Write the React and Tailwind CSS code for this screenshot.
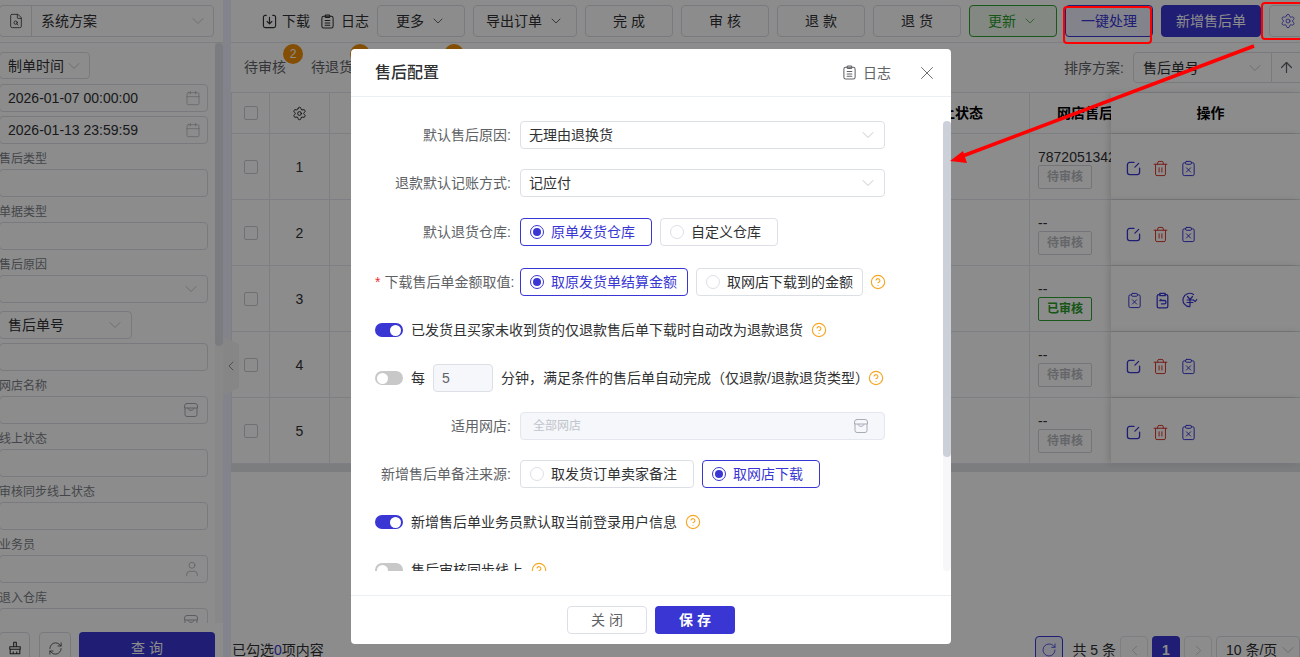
import { ChevronDown, ChevronLeft, ChevronRight, Calendar, Settings, RotateCw, Trash2, ClipboardX, ArrowUp, CircleHelp, FileSearch, User, X, RefreshCw } from 'lucide-react'

const DownloadIcon = () => (
  <svg width="15" height="15" viewBox="0 0 16 16" fill="none" stroke="currentColor" strokeWidth="1.2" strokeLinecap="round" strokeLinejoin="round">
    <path d="M4.5 1.5H3.5a2 2 0 0 0-2 2v9a2 2 0 0 0 2 2h9a2 2 0 0 0 2-2v-9a2 2 0 0 0-2-2h-1" />
    <path d="M8 3.5v7M5.5 8 8 10.5 10.500 8" />
  </svg>
)

const LogIcon = () => (
  <svg width="15" height="15" viewBox="0 0 16 16" fill="none" stroke="currentColor" strokeWidth="1.1" strokeLinecap="round" strokeLinejoin="round">
    <rect x="2" y="2.500" width="12" height="12.500" rx="2" />
    <rect x="5.500" y="1" width="5" height="2.800" rx="1" />
    <path d="M5.500 7h5M5.500 9.500h5M5.500 12h5" />
  </svg>
)

const ShopIcon = ({ size = 15, className = '' }) => (
  <svg className={className} width={size} height={size} viewBox="0 0 16 16" fill="none" stroke="currentColor" strokeWidth="1" strokeLinecap="round" strokeLinejoin="round">
    <path d="M4 1.500h8a2.500 2.500 0 0 1 2.500 2.500v2h-13V4A2.500 2.500 0 0 1 4 1.500Z" />
    <path d="M2 6v6.500a2 2 0 0 0 2 2h8a2 2 0 0 0 2-2V6" />
    <path d="M5 6.500c.5 2.500 5.500 2.500 6 0" />
  </svg>
)

const BroomIcon = () => (
  <svg width="14" height="14" viewBox="0 0 16 16" fill="none" stroke="currentColor" strokeWidth="1.2" strokeLinejoin="round">
    <path d="M6.500 1.500h3v5h-3zM2 6.500h12v3H2zM2.500 9.500v5h11v-5M6 14.500v-2.500M10 14.500v-2.500" />
  </svg>
)

const EditIcon = () => (
  <svg width="15" height="15" viewBox="0 0 16 16" fill="none" stroke="#3936d4" strokeWidth="1.4" strokeLinecap="round">
    <path d="M8.500 1.500H4a2.500 2.500 0 0 0-2.500 2.500v8A2.500 2.500 0 0 0 4 14.500h8a2.500 2.500 0 0 0 2.500-2.500V7.500" />
    <path d="M13.500 2.500 9.500 6.500" />
  </svg>
)

const ReturnIcon = () => (
  <svg width="17" height="17" viewBox="0 0 16 16" fill="none" stroke="#3936d4" strokeWidth="1.2" strokeLinecap="round" strokeLinejoin="round">
    <path d="M5.500 2.500H4.500a1.500 1.500 0 0 0-1.500 1.500v9.500a1.500 1.500 0 0 0 1.500 1.500h7a1.500 1.500 0 0 0 1.500-1.500V4a1.500 1.500 0 0 0-1.500-1.500h-1" />
    <path d="M5.500 1.200h5v2.300h-5z" />
    <path d="M6.500 7 5.500 8h4.200a1.500 1.500 0 0 1 0 3.200H7" />
  </svg>
)

const RefundIcon = () => (
  <svg width="16" height="16" viewBox="0 0 16 16" fill="none" stroke="#3936d4" strokeWidth="1.2" strokeLinecap="round" strokeLinejoin="round">
    <path d="M11.500 2.500A6.700 6.700 0 1 0 8 14.700" />
    <path d="M5.500 4.500 8 7.500l2.500-3M5 8h6M5 10.500h6M8 8v5.500M14.800 7.500l-1.500 2-2-1.500" />
  </svg>
)

const Help = () => <CircleHelp size={16} strokeWidth={1.7} className="text-[#f5a623] shrink-0" />

const Chevron = ({ className = '' }) => <ChevronDown size={20} strokeWidth={1} className={`text-[#b8bcc5] shrink-0 ${className}`} />

function Box({ children, className = '' }) {
  return (
    <div className={`h-7 flex items-center justify-between pl-2 pr-[6px] border border-[#dcdfe6] rounded-[4px] bg-white text-[#303133] text-sm whitespace-nowrap ${className}`}>
      {children}
    </div>
  )
}

function Field({ label, children }) {
  return (
    <div>
      <div className="h-[25px] pt-[4px] leading-[22px] text-xs text-[#7b7f87] whitespace-nowrap">{label}</div>
      <Box>{children}</Box>
    </div>
  )
}

function Sidebar() {
  return (
    <aside className="w-[223px] h-full flex flex-col shrink-0 bg-white">
      <div className="h-[43px] shrink-0 border-b border-[#e4e7ed] flex items-start pt-[5px] pr-[9px]">
        <div className="-ml-px flex-1 h-[32px] flex items-center border border-[#dcdfe6] rounded-[4px] text-sm text-[#303133]">
          <div className="w-[32px] h-full flex items-center justify-center border-r border-[#dcdfe6]">
            <FileSearch size={16} strokeWidth={1.2} />
          </div>
          <span className="ml-[9px] flex-1">系统方案</span>
          <Chevron className="mr-[5px]" />
        </div>
      </div>
      <div className="flex-1 flex min-h-0">
        <div className="w-[215px] overflow-hidden pt-[9px] pr-[7px]">
          <div className="-ml-px flex flex-col">
            <Box className="w-[91px] !h-[27px]">制单时间<Chevron /></Box>
            <Box className="mt-[5px]"><span>2026-01-07 00:00:00</span><Calendar size={16} strokeWidth={1} className="text-[#a8acb5]" /></Box>
            <Box className="mt-1"><span>2026-01-13 23:59:59</span><Calendar size={16} strokeWidth={1} className="text-[#a8acb5]" /></Box>
            <Field label="售后类型" />
            <Field label="单据类型" />
            <Field label="售后原因"><span /><Chevron /></Field>
            <Box className="w-[133px] mt-2">售后单号<Chevron /></Box>
            <Box className="mt-1" />
            <Field label="网店名称"><span /><ShopIcon size={16} className="text-[#a8acb5] mr-[2px]" /></Field>
            <Field label="线上状态" />
            <Field label="审核同步线上状态" />
            <Field label="业务员"><span /><User size={18} strokeWidth={1} className="text-[#a8acb5]" /></Field>
            <Field label="退入仓库"><span /><ShopIcon size={16} className="text-[#a8acb5] mr-[2px]" /></Field>
          </div>
        </div>
        <div className="w-2 bg-[#f7f7fa]">
          <div className="h-[303px] bg-[#dfe2e8] rounded" />
        </div>
      </div>
      <div className="h-[34px] shrink-0 pt-[9px] flex pr-2">
        <div className="-ml-px w-[31px] h-[32px] border border-[#dcdfe6] rounded-[4px] flex items-center justify-center text-[#303133]"><BroomIcon /></div>
        <div className="ml-[9px] w-[32px] h-[32px] border border-[#dcdfe6] rounded-[4px] flex items-center justify-center text-[#303133]"><RefreshCw size={15} strokeWidth={1.2} /></div>
        <div className="ml-2 w-[136px] h-[32px] bg-[#3936d4] rounded-[4px] text-white text-sm flex items-center justify-center">查 询</div>
      </div>
    </aside>
  )
}

const Btn = ({ children, className = '' }) => (
  <button className={`w-[88px] h-[32px] shrink-0 border border-[#dcdfe6] rounded-[4px] text-sm text-[#303133] bg-white flex items-center justify-center gap-[6px] whitespace-nowrap ${className}`}>
    {children}
  </button>
)

function Toolbar() {
  return (
    <div className="h-[43px] shrink-0 border-b border-[#e4e7ed] flex items-start pt-[5px] gap-2 pl-[31px] text-sm text-[#303133]">
      <span className="h-[32px] shrink-0 flex items-center gap-[5px] whitespace-nowrap"><DownloadIcon />下载</span>
      <span className="h-[32px] shrink-0 flex items-center gap-[6px] ml-[2px] whitespace-nowrap"><LogIcon />日志</span>
      <Btn>更多<ChevronDown size={16} strokeWidth={1.1} /></Btn>
      <Btn className="!w-[104px]">导出订单<ChevronDown size={16} strokeWidth={1.1} /></Btn>
      <Btn>完 成</Btn>
      <Btn>审 核</Btn>
      <Btn>退 款</Btn>
      <Btn>退 货</Btn>
      <Btn className="!border-[#2ca02c] !text-[#2a9d2a] !bg-[#eef8ee]">更新<ChevronDown size={16} strokeWidth={1.1} /></Btn>
      <Btn className="!border-[#3936d4] !text-[#3936d4] !bg-[#eeeeff]">一键处理</Btn>
      <Btn className="!w-[100px] !border-[#3936d4] !bg-[#3936d4] !text-white">新增售后单</Btn>
      <Btn className="!w-[40px] !text-[#3936d4] pr-[2px]"><Settings size={16} strokeWidth={1.2} /></Btn>
    </div>
  )
}

const Badge = ({ n }) => (
  <span className="absolute left-[39px] -top-[13px] w-5 h-5 rounded-full bg-[#f0900a] text-white text-xs flex items-center justify-center">{n}</span>
)

function Tabs() {
  return (
    <div className="h-[49px] shrink-0 flex items-center text-sm text-[#5f6369] pl-[13px]">
      <span className="relative mr-[25px] -mt-px">待审核<Badge n="2" /></span>
      <span className="relative mr-[52px] -mt-px">待退货<Badge n="3" /></span>
      {/* third tab sits behind the dialog, only its badge shows */}
      <span className="relative w-[42px] h-5 -mt-px"><Badge n="1" /></span>
      <div className="ml-auto flex items-center">
        <span>排序方案:</span>
        <div className="ml-[9px] w-[139px] h-[31px] flex items-center justify-between pl-[9px] pr-[6px] border border-[#dcdfe6] rounded-l-[4px] text-[#303133]">售后单号<Chevron /></div>
        <div className="w-[28px] h-[31px] flex items-center justify-center border-y border-[#dcdfe6]"><ArrowUp size={17} strokeWidth={1.7} /></div>
      </div>
    </div>
  )
}

const rows = [
  { id: 1, no: '78720513420', status: '待审核' },
  { id: 2, no: '--', status: '待审核' },
  { id: 3, no: '--', status: '已审核' },
  { id: 4, no: '--', status: '待审核' },
  { id: 5, no: '--', status: '待审核' },
]

const Check = () => <span className="w-[14px] h-[14px] block border border-[#c9ccd3] rounded-[2px]" />

function Table() {
  return (
    <div className="shrink-0 text-sm text-[#303133] border-t border-[#e4e7ed]">
      <div className="h-[41px] flex border-b border-[#e4e7ed] font-bold text-[#000]">
        <div className="w-[39px] flex items-center justify-center border-x border-[#e4e7ed]"><Check /></div>
        <div className="w-[60px] flex items-center justify-center border-r border-[#e4e7ed]"><Settings size={15} strokeWidth={1.3} /></div>
        <div className="w-[551px] border-r border-[#e4e7ed]" />
        <div className="w-[149px] flex items-center justify-center border-r border-[#e4e7ed]">线上状态</div>
        <div className="w-[81px] flex items-center pl-[27px] overflow-hidden whitespace-nowrap">网店售后单号</div>
        <div className="w-[189px] flex items-center justify-center pl-[10px] bg-white shadow-[-3px_0_6px_rgba(0,0,0,0.12)]">操作</div>
      </div>
      {rows.map(r => (
        <div key={r.id} className="h-[66px] flex border-b border-[#e4e7ed]">
          <div className="w-[39px] flex items-center justify-center border-x border-[#e4e7ed]"><Check /></div>
          <div className="w-[60px] flex items-center justify-center border-r border-[#e4e7ed]">{r.id}</div>
          <div className="w-[551px] border-r border-[#e4e7ed]" />
          <div className="w-[149px] border-r border-[#e4e7ed]" />
          <div className="w-[81px] pl-2 pt-[13px] overflow-hidden whitespace-nowrap leading-[20px]">
            {r.no}
            <span className={`-mt-[2px] w-[54px] h-[24px] flex items-center justify-center border rounded-[2px] text-xs font-bold ${r.status === '已审核' ? 'border-[#2ca02c] text-[#2a9d2a]' : 'border-[#d4d6da] text-[#b8bbc0]'}`}>{r.status}</span>
          </div>
          <div className="w-[189px] flex items-center gap-[11px] pl-[15px] pt-[3px] bg-white shadow-[-3px_0_6px_rgba(0,0,0,0.12)]">
            {r.status === '已审核' ? (
              <>
                <ClipboardX size={17} strokeWidth={1.4} className="text-[#3936d4]" />
                <ReturnIcon />
                <RefundIcon />
              </>
            ) : (
              <>
                <EditIcon />
                <Trash2 size={17} strokeWidth={1.4} className="text-[#d9362b]" />
                <ClipboardX size={17} strokeWidth={1.4} className="text-[#3936d4]" />
              </>
            )}
          </div>
        </div>
      ))}
      <div className="h-2 flex bg-[#e1e3e6]" />
    </div>
  )
}

function Pager() {
  const cell = 'w-[28px] h-[28px] border border-[#e4e7ed] rounded-[4px] flex items-center justify-center text-[#b8bcc5]'
  return (
    <div className="mt-auto h-[21px] shrink-0 flex items-start text-sm text-[#303133]">
      <span className="mt-[4px] leading-[20px] pl-px">已勾选<span className="text-[#3936d4]">0</span>项内容</span>
      <div className="ml-auto flex items-center gap-1">
        <div className="w-[28px] h-[28px] border border-[#3936d4] bg-[#eeeeff] rounded-[4px] flex items-center justify-center text-[#3936d4] mr-[5px]"><RotateCw size={16} strokeWidth={1.2} /></div>
        <span>共 5 条</span>
        <div className={cell}><ChevronLeft size={17} strokeWidth={1} /></div>
        <div className="w-[28px] h-[28px] bg-[#3936d4] rounded-[4px] flex items-center justify-center text-white font-bold">1</div>
        <div className={cell}><ChevronRight size={17} strokeWidth={1} /></div>
        <div className="w-[84px] h-[28px] border border-[#dcdfe6] rounded-[4px] flex items-center gap-[1px] pl-[9px] whitespace-nowrap">10 条/页<Chevron /></div>
      </div>
    </div>
  )
}

function Radio({ on, children, className = '' }) {
  return (
    <div className={`h-7 flex items-center pl-[9px] border rounded-[4px] shrink-0 ${on ? 'border-[#3936d4] text-[#3936d4]' : 'border-[#dcdfe6] text-[#303133]'} ${className}`}>
      {on ? (
        <span className="w-[14px] h-[14px] rounded-full border border-[#3936d4] flex items-center justify-center mr-[7px]"><span className="w-2 h-2 rounded-full bg-[#3936d4]" /></span>
      ) : (
        <span className="w-[14px] h-[14px] rounded-full border border-[#dcdfe6] mr-[7px]" />
      )}
      {children}
    </div>
  )
}

function Row({ label, star, children, className = '' }) {
  return (
    <div className={`flex items-center h-7 ${className}`}>
      <div className="w-[136px] text-right text-[#606266] whitespace-nowrap mr-[9px]">
        {star && <span className="text-[#f03030] mr-[4px]">*</span>}{label}:
      </div>
      {children}
    </div>
  )
}

const Toggle = ({ on }) => (
  <span className={`w-[28px] h-[14px] rounded-full flex items-center px-[2px] shrink-0 ${on ? 'bg-[#3936d4] justify-end' : 'bg-[#c8c8c8]'}`}>
    <span className="w-[11px] h-[11px] rounded-full bg-white" />
  </span>
)

function Modal() {
  return (
    <div className="absolute left-[351px] top-[49px] w-[600px] h-[595px] bg-white rounded-[4px] flex flex-col text-sm text-[#303133]">
      <div className="h-[48px] shrink-0 border-b border-[#ebeef5] flex items-center pl-6 pr-[13px]">
        <span className="text-base font-medium flex-1">售后配置</span>
        <span className="flex items-center gap-[6px] text-[#606266]"><LogIcon />日志</span>
        <X size={22} strokeWidth={1} className="ml-[25px] text-[#606266]" />
      </div>
      <div className="flex-1 flex pt-6 pb-6 pl-6 min-h-0">
        <div className="flex-1 overflow-hidden">
          <Row label="默认售后原因">
            <div className="w-[365px] h-7 flex items-center justify-between pl-[8px] pr-[6px] border border-[#dcdfe6] rounded-[4px]">无理由退换货<Chevron /></div>
          </Row>
          <Row label="退款默认记账方式" className="mt-5">
            <div className="w-[365px] h-7 flex items-center justify-between pl-[8px] pr-[6px] border border-[#dcdfe6] rounded-[4px]">记应付<Chevron /></div>
          </Row>
          <Row label="默认退货仓库" className="mt-[21px]">
            <Radio on className="w-[132px]">原单发货仓库</Radio>
            <Radio className="w-[118px] ml-2">自定义仓库</Radio>
          </Row>
          <Row label="下载售后单金额取值" star className="mt-[22px]">
            <Radio on className="w-[168px]">取原发货单结算金额</Radio>
            <Radio className="w-[167px] ml-2">取网店下载到的金额</Radio>
            <span className="ml-[7px]"><Help /></span>
          </Row>
          <div className="h-7 flex items-center mt-5">
            <Toggle on />
            <span className="ml-2">已发货且买家未收到货的仅退款售后单下载时自动改为退款退货</span>
            <span className="ml-2"><Help /></span>
          </div>
          <div className="h-7 flex items-center mt-5">
            <Toggle />
            <span className="ml-2">每</span>
            <div className="ml-2 w-[60px] h-7 flex items-center pl-[8px] border border-[#dcdfe6] bg-[#f5f7fa] rounded-[4px] text-[#606266]">5</div>
            <span className="ml-2">分钟，满足条件的售后单自动完成（仅退款/退款退货类型）</span>
            <span className="-ml-[1px]"><Help /></span>
          </div>
          <Row label="适用网店" className="mt-5">
            <div className="w-[365px] h-7 flex items-center justify-between pl-3 pr-[15px] border border-[#e4e7ed] bg-[#f5f7fa] rounded-[4px] text-xs text-[#c0c4cc]">全部网店<ShopIcon size={16} className="text-[#a8acb5]" /></div>
          </Row>
          <Row label="新增售后单备注来源" className="mt-5">
            <Radio className="w-[174px]">取发货订单卖家备注</Radio>
            <Radio on className="w-[118px] ml-2">取网店下载</Radio>
          </Row>
          <div className="h-7 flex items-center mt-5">
            <Toggle on />
            <span className="ml-2">新增售后单业务员默认取当前登录用户信息</span>
            <span className="ml-2"><Help /></span>
          </div>
          <div className="h-7 flex items-center mt-5">
            <Toggle />
            <span className="ml-2">售后审核同步线上</span>
            <span className="ml-2"><Help /></span>
          </div>
        </div>
        <div className="w-2 bg-[#f7f7fa] rounded">
          <div className="h-[336px] bg-[#ccd0d8] rounded" />
        </div>
      </div>
      <div className="h-[49px] shrink-0 border-t border-[#ebeef5] flex items-center justify-center gap-2">
        <button className="w-[80px] h-7 border border-[#dcdfe6] rounded-[4px] text-[#606266]">关 闭</button>
        <button className="w-[80px] h-7 rounded-[4px] bg-[#3936d4] text-white font-bold">保 存</button>
      </div>
    </div>
  )
}

export default function App() {
  return (
    <div className="relative w-full h-[657px] overflow-hidden flex bg-[#eeeeff] font-['Liberation_Sans','Noto_Sans_CJK_SC',sans-serif]">
      <Sidebar />
      <main className="ml-2 flex-1 min-w-0 h-full flex flex-col bg-white overflow-hidden">
        <Toolbar />
        <Tabs />
        <Table />
        <Pager />
      </main>
      <div className="absolute left-[223px] top-[337px] w-4 h-[58px] bg-[#f4f4f4] [clip-path:polygon(0_0,100%_12%,100%_88%,0_100%)] flex items-center justify-center text-[#7a7a7a]">
        <ChevronLeft size={16} strokeWidth={1.2} />
      </div>
      <div className="absolute inset-0 bg-black/45" />
      <Modal />
      <div className="absolute left-[1063px] top-[6px] w-[89px] h-[38px] border-2 border-[#f00] rounded-[4px]" />
      <div className="absolute left-[1261px] top-[2px] w-[45px] h-[38px] border-2 border-[#f00] rounded-[4px]" />
      <svg className="absolute inset-0 pointer-events-none" width="1300" height="657">
        <line x1="1254" y1="46" x2="960" y2="157" stroke="#f00" strokeWidth="3.500" />
        <polygon points="950,161 963,151 967,163" fill="#f00" />
      </svg>
    </div>
  )
}
